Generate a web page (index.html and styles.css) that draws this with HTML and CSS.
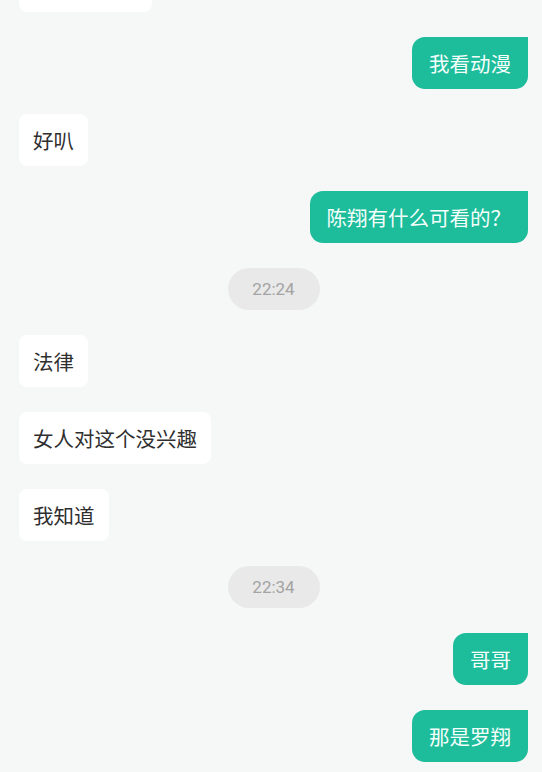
FILE: index.html
```html
<!DOCTYPE html>
<html lang="zh-CN">
  <head>
    <meta charset="UTF-8" />
    <meta name="viewport" content="width=device-width, initial-scale=1.0" />
    <title>聊天</title>
    <link rel="stylesheet" href="styles.css">
  </head>
  <body>
    <div class="chat">
      <div class="row left"><div class="bubble cut"></div></div>
      <div class="row right"><div class="bubble">我看动漫</div></div>
      <div class="row left"><div class="bubble">好叭</div></div>
      <div class="row right"><div class="bubble">陈翔有什么可看的？</div></div>
      <div class="time">22:24</div>
      <div class="row left"><div class="bubble">法律</div></div>
      <div class="row left"><div class="bubble">女人对这个没兴趣</div></div>
      <div class="row left"><div class="bubble">我知道</div></div>
      <div class="time">22:34</div>
      <div class="row right"><div class="bubble">哥哥</div></div>
      <div class="row right"><div class="bubble">那是罗翔</div></div>
    </div>
  </body>
</html>
```

FILE: styles.css
```css
html,
body {
  margin: 0;
  height: 100%;
  overflow: hidden;
}
body {
  font-family: "Noto Sans CJK SC", "Noto Sans", sans-serif;
  background-color: #f6f7f7;
}
.chat {
  display: flex;
  flex-direction: column;
  gap: 25px;
  margin-top: -40px;
  padding: 0 14px 0 19px;
}
.row {
  display: flex;
}
.row.right {
  justify-content: flex-end;
}
.bubble {
  font-size: 20.5px;
  line-height: 28px;
  padding: 12px 14px;
  border-radius: 8px;
  background-color: #ffffff;
  color: #2f2f2f;
}
.bubble.cut {
  width: 105px;
  height: 28px;
}
.right .bubble {
  padding: 12px 17px;
  background-color: #1dbc9b;
  color: #f4fffb;
  border-radius: 13px 0 13px 13px;
}
.time {
  align-self: center;
  width: 92px;
  height: 42px;
  line-height: 42px;
  text-align: center;
  border-radius: 21px;
  background-color: #e9e9e9;
  color: #a3a3a3;
  font-family: Roboto, sans-serif;
  font-size: 17px;
}
```
